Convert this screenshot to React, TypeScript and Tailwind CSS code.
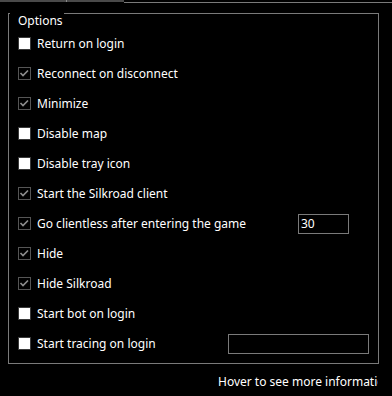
import React from "react";

// ─── Data ─────────────────────────────────────────────────────────────────────

type Option = { label: string; checked: boolean; input?: "short" | "long"; value?: string };

const OPTIONS: Option[] = [
  { label: "Return on login", checked: false },
  { label: "Reconnect on disconnect", checked: true },
  { label: "Minimize", checked: true },
  { label: "Disable map", checked: false },
  { label: "Disable tray icon", checked: false },
  { label: "Start the Silkroad client", checked: true },
  { label: "Go clientless after entering the game", checked: true, input: "short", value: "30" },
  { label: "Hide", checked: true },
  { label: "Hide Silkroad", checked: true },
  { label: "Start bot on login", checked: false },
  { label: "Start tracing on login", checked: false, input: "long", value: "" },
];

// ─── Checkbox ─────────────────────────────────────────────────────────────────

function Box({ checked }: { checked: boolean }) {
  if (!checked) {
    return <div className="h-[13px] w-[13px] shrink-0 border border-[#3a3a3a] bg-white" />;
  }
  return (
    <div className="h-[13px] w-[13px] shrink-0 border border-[#555555] bg-black">
      <svg width="11" height="11" viewBox="0 0 11 11" className="block">
        <polyline points="1.5,5 4,7.5 9,2.5" fill="none" stroke="#8c8c8c" strokeWidth="1.7" />
      </svg>
    </div>
  );
}

// ─── Row ──────────────────────────────────────────────────────────────────────

function Row({ item }: { item: Option }) {
  return (
    <div className="flex h-[13px] items-center">
      <Box checked={item.checked} />
      <span className="ml-[6px] whitespace-nowrap leading-[15px]">{item.label}</span>
      {item.input === "short" && (
        <div className="ml-auto mr-[29px] flex h-[20px] w-[51px] items-center border border-[#7a7a7a] pl-[2px]">
          {item.value}
        </div>
      )}
      {item.input === "long" && (
        <div className="ml-auto mr-[9px] h-[20px] w-[141px] border border-[#7a7a7a]" />
      )}
    </div>
  );
}

// ─── Page ─────────────────────────────────────────────────────────────────────

export default function App() {
  return (
    <div className="h-[396px] w-[392px] overflow-hidden bg-black text-[12px] text-white [font-family:'Noto_Sans',sans-serif]">
      {/* Tab strip remnant */}
      <div className="flex h-[3px]">
        <div className="h-[2px] w-[66px] bg-[#4a4a4a]" />
        <div className="h-[2px] w-[1px] bg-[#8a8a8a]" />
        <div className="h-[2px] w-[57px] bg-[#4a4a4a]" />
        <div className="flex-1 border-b border-[#7a7a7a]" />
      </div>

      {/* Options group */}
      <div className="relative ml-[8px] mt-[10px] h-[351px] w-[371px] border border-[#7a7a7a]">
        <span className="absolute -top-[1px] left-[1px] bg-black pl-[8px] pr-[1px] leading-[15px]">Options</span>
        <div className="flex flex-col gap-[17px] pl-[9px] pt-[23px]">
          {OPTIONS.map((o) => (
            <Row key={o.label} item={o} />
          ))}
        </div>
      </div>

      {/* Status hint, clipped at the right like the original */}
      <div className="mt-[10px] w-[378px] overflow-hidden whitespace-nowrap pl-[218px] leading-[15px]">
        Hover to see more information
      </div>
    </div>
  );
}
